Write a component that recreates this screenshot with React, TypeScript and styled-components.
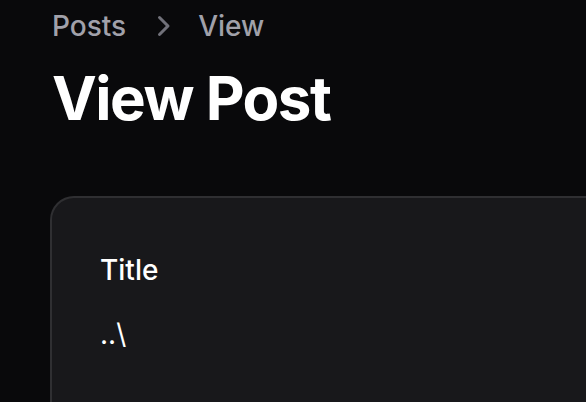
import React from "react";
import styled, { createGlobalStyle } from "styled-components";

const GlobalStyle = createGlobalStyle`
  html, body {
    margin: 0;
    padding: 0;
    background: #09090b;
    overflow: hidden;
  }
  body {
    font-family: Inter, "Noto Sans", sans-serif;
    color: #ffffff;
  }
`;

const Page = styled.div`
  display: flex;
  flex-direction: column;
  gap: 62px;
  padding: 6px 0 0 50px;
  min-height: 402px;
  box-sizing: border-box;
`;

const Header = styled.header`
  display: flex;
  flex-direction: column;
  gap: 16px;
  padding-left: 2px;
`;

const Crumbs = styled.ol`
  display: flex;
  align-items: center;
  gap: 16px;
  margin: 0;
  padding: 0;
  list-style: none;
`;

const Crumb = styled.li`
  display: flex;
  align-items: center;
  gap: 16px;
  font-size: 28px;
  line-height: 40px;
  font-weight: 500;
  color: #a1a1aa;
`;

const Chevron = styled.svg`
  width: 40px;
  height: 40px;
  color: #71717a;
  flex-shrink: 0;
`;

const Title = styled.h1`
  margin: 0;
  font-size: 60px;
  line-height: 72px;
  font-weight: 700;
  letter-spacing: -1.5px;
  color: #ffffff;
`;

const Card = styled.section`
  width: 620px;
  min-height: 260px;
  box-sizing: border-box;
  padding: 48px;
  background: #18181b;
  border: 2px solid rgba(255, 255, 255, 0.1);
  border-radius: 24px;
`;

const Entry = styled.dl`
  display: flex;
  flex-direction: column;
  gap: 16px;
  margin: 0;
`;

const Label = styled.dt`
  font-size: 28px;
  line-height: 48px;
  font-weight: 500;
  color: #ffffff;
`;

const Value = styled.dd`
  margin: 0;
  font-size: 28px;
  line-height: 48px;
  color: #ffffff;
`;

const ChevronRight = () => (
  <Chevron viewBox="0 0 20 20" fill="currentColor" aria-hidden="true">
    <path
      fillRule="evenodd"
      d="M8.22 5.22a.75.75 0 0 1 1.06 0l4.25 4.25a.75.75 0 0 1 0 1.06l-4.25 4.25a.75.75 0 0 1-1.06-1.06L11.94 10 8.22 6.28a.75.75 0 0 1 0-1.06Z"
      clipRule="evenodd"
    />
  </Chevron>
);

const App: React.FC = () => {
  return (
    <>
      <GlobalStyle />
      <Page>
        <Header>
          <Crumbs>
            <Crumb>Posts</Crumb>
            <Crumb>
              <ChevronRight />
              View
            </Crumb>
          </Crumbs>
          <Title>View Post</Title>
        </Header>
        <Card>
          <Entry>
            <Label>Title</Label>
            <Value>..\</Value>
          </Entry>
        </Card>
      </Page>
    </>
  );
};

export default App;
